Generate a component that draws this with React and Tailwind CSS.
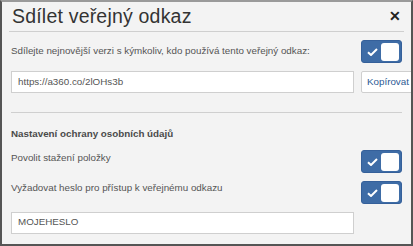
import React from "react";

function Toggle() {
  return (
    <div className="relative w-[41px] h-[23px] shrink-0 rounded-[3px] bg-[#3e6ca6] border border-[#35609a]">
      <svg
        className="absolute left-[5px] top-[7px]"
        width="11"
        height="8"
        viewBox="0 0 11 8"
        fill="none"
      >
        <path d="M1 4.2 L4 7 L10 1" stroke="#fff" strokeWidth="2" />
      </svg>
      <div className="absolute right-[2px] top-[2px] w-[18px] h-[18px] rounded-[3px] bg-white" />
    </div>
  );
}

export default function App() {
  return (
    <div
      className="w-[413px] h-[246px] overflow-hidden bg-[#f3f3f3] border-2 border-[#555] border-t-[#9a9a9a] text-[#555]"
      style={{ fontFamily: '"Liberation Sans", Arial, sans-serif' }}
    >
      {/* header */}
      <div className="mx-[7px] h-[30px] flex items-center justify-between border-b border-[#cfcfcf] px-[3px]">
        <h1 className="text-[19.5px] leading-none text-[#333] tracking-[0.2px] pt-[1px]">
          Sdílet veřejný odkaz
        </h1>
        <span className="text-[14px] font-bold leading-none text-[#222] pb-[2px]">
          ✕
        </span>
      </div>

      <div className="pl-[9px] pr-[9px]">
        {/* share toggle */}
        <div className="mt-[8px] flex items-center justify-between h-[23px]">
          <p className="text-[9.8px]">
            Sdílejte nejnovější verzi s kýmkoliv, kdo používá tento veřejný odkaz:
          </p>
          <Toggle />
        </div>

        {/* link */}
        <div className="mt-[8px] flex gap-[7px] w-[420px]">
          <div className="w-[343px] h-[22px] bg-white border border-[#cfcfcf] flex items-center pl-[6px] text-[9.8px]">
            https://a360.co/2lOHs3b
          </div>
          <div className="w-[70px] h-[22px] bg-white border border-[#cfcfcf] rounded-[2px] flex items-center pl-[5px] text-[9.8px] text-[#2d5a94]">
            Kopírovat
          </div>
        </div>

        <div className="mt-[19px] h-px bg-[#cfcfcf]" />

        <p className="mt-[14px] text-[9.8px] font-bold text-[#4a4a4a]">
          Nastavení ochrany osobních údajů
        </p>

        <div className="mt-[8px] flex items-start justify-between">
          <p className="text-[9.8px] pt-[1px]">Povolit stažení položky</p>
          <Toggle />
        </div>

        <div className="mt-[8px] flex items-start justify-between">
          <p className="text-[9.8px]">Vyžadovat heslo pro přístup k veřejnému odkazu</p>
          <Toggle />
        </div>

        <div className="mt-[8px] w-[343px] h-[22px] bg-white border border-[#cfcfcf] flex items-center pl-[6px] text-[9.8px]">
          MOJEHESLO
        </div>
      </div>
    </div>
  );
}
